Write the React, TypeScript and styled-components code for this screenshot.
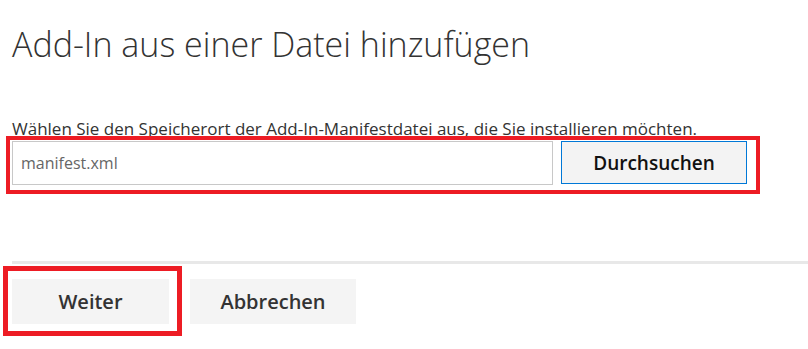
import React from 'react';
import styled, { createGlobalStyle } from 'styled-components';

const GlobalStyle = createGlobalStyle`
  body {
    margin: 0;
    background: #fff;
    font-family: 'Segoe UI', 'Open Sans', 'Noto Sans', sans-serif;
  }
`;

function App() {
  return (
    <Page>
      <GlobalStyle />
      <Title>Add-In aus einer Datei hinzufügen</Title>
      <Hint>Wählen Sie den Speicherort der Add-In-Manifestdatei aus, die Sie installieren möchten.</Hint>
      <Highlight $border={4} $pad="1px 9px 5px 2px" $shift={6}>
        <FileRow>
          <FileInput readOnly value="manifest.xml" />
          <BrowseButton>Durchsuchen</BrowseButton>
        </FileRow>
      </Highlight>
      <Footer>
        <Highlight $border={5} $pad="8px 8px 7px 4px" $shift={9}>
          <ActionButton>Weiter</ActionButton>
        </Highlight>
        <ActionButton $wide>Abbrechen</ActionButton>
      </Footer>
    </Page>
  );
}

export default App;

const Page = styled.div`
  padding: 0 0 0 12px;
  width: 796px;
  height: 349px;
  overflow: hidden;
`;

const Title = styled.h1`
  margin: 24px 0 0;
  font-size: 34px;
  font-weight: 300;
  line-height: 40px;
  color: #333;
`;

const Hint = styled.p`
  margin: 55px 0 -3px;
  font-size: 17px;
  line-height: 20px;
  color: #333;
  white-space: nowrap;
`;

const Highlight = styled.div<{ $border: number; $pad: string; $shift: number }>`
  display: inline-flex;
  border: ${p => p.$border}px solid #ed1c24;
  padding: ${p => p.$pad};
  margin-left: -${p => p.$shift}px;
`;

const FileRow = styled.div`
  display: flex;
  align-items: flex-start;
  gap: 8px;
`;

const FileInput = styled.input`
  box-sizing: border-box;
  width: 541px;
  height: 44px;
  padding: 0 8px;
  border: 1px solid #c8c8c8;
  font-family: inherit;
  font-size: 16px;
  color: #666;
  outline: none;
`;

const BrowseButton = styled.button`
  box-sizing: border-box;
  width: 186px;
  height: 43px;
  border: 1px solid #0078d7;
  background: #f3f3f3;
  font-family: inherit;
  font-size: 19px;
  font-weight: 600;
  color: #111;
`;

const Footer = styled.div`
  display: flex;
  align-items: flex-start;
  gap: 8px;
  margin-top: 67px;
  padding-top: 2px;
  border-top: 3px solid #e8e8e8;
  & > button {
    margin-top: 13px;
  }
`;

const ActionButton = styled.button<{ $wide?: boolean }>`
  box-sizing: border-box;
  width: ${p => (p.$wide ? 166 : 157)}px;
  height: 45px;
  border: none;
  background: #f4f4f4;
  font-family: inherit;
  font-size: 20px;
  font-weight: 600;
  color: #333;
`;
